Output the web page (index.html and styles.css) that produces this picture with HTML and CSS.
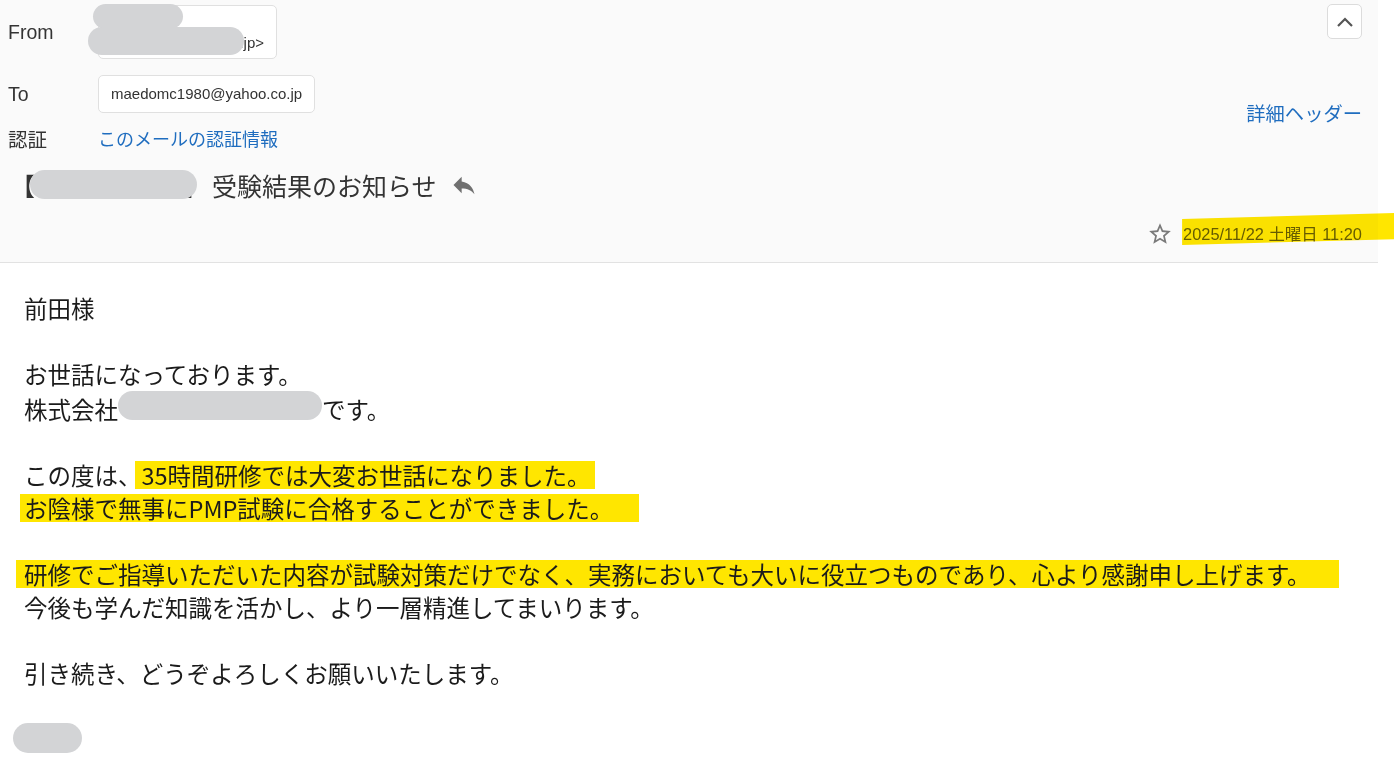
FILE: index.html
```html
<!DOCTYPE html>
<html lang="ja">
<head>
  <meta charset="UTF-8">
  <meta name="viewport" content="width=device-width, initial-scale=1.0">
  <title>受験結果のお知らせ</title>
  <link rel="stylesheet" href="styles.css">
</head>
<body>

  <header class="mail-head">
    <div class="head-top">
      <div class="meta">
        <div class="meta-row">
          <span class="label">From</span>
          <div class="addr addr-from">
            <span class="addr-line">&nbsp;</span>
            <span class="addr-line">.jp&gt;</span>
            <span class="blob blob-a"></span>
            <span class="blob blob-b"></span>
          </div>
        </div>
        <div class="meta-row to-row">
          <span class="label">To</span>
          <div class="addr">maedomc1980@yahoo.co.jp</div>
        </div>
        <div class="meta-row auth-row">
          <span class="label">認証</span>
          <a class="link" href="#">このメールの認証情報</a>
        </div>
      </div>

      <div class="head-side">
        <button class="collapse" aria-label="閉じる">
          <svg width="18" height="12" viewBox="0 0 18 12"><polyline points="2,10 9,3 16,10" fill="none" stroke="#555" stroke-width="2.2"/></svg>
        </button>
        <a class="link detail-link" href="#">詳細ヘッダー</a>
      </div>
    </div>

    <h1 class="subject">
      <span class="subject-tag">【<span class="tag-gap"></span>】<span class="blob blob-tag"></span></span>受験結果のお知らせ
      <svg class="reply" width="28" height="28" viewBox="0 0 24 24"><path d="M10 9V5l-7 7 7 7v-4.1c5 0 8.5 1.6 11 5.1-1-5-4-10-11-11z" fill="#707070"/></svg>
    </h1>

    <div class="date-row">
      <svg width="26" height="26" viewBox="0 0 24 24"><path d="M22 9.24l-7.19-.62L12 2 9.19 8.63 2 9.24l5.46 4.730L5.82 21 12 17.27 18.18 21l-1.63-7.03L22 9.24zM12 15.4l-3.76 2.27 1-4.28-3.32-2.88 4.38-.38L12 6.1l1.71 4.04 4.38.38-3.32 2.88 1 4.28L12 15.4z" fill="#7a7a7a"/></svg>
      <span class="date">2025/11/22 土曜日 11:20</span>
    </div>
  </header>

  <main class="mail-body">
    <p>前田様</p>
    <p>お世話になっております。<br>株式会社<span class="blob blob-company"></span>です。</p>
    <p>この度は、<mark class="hl hl-a">35時間研修では大変お世話になりました。</mark><br><mark class="hl hl-b">お陰様で無事にPMP試験に合格することができました。</mark></p>
    <p><mark class="hl hl-c">研修でご指導いただいた内容が試験対策だけでなく、実務においても大いに役立つものであり、心より感謝申し上げます。</mark><br>今後も学んだ知識を活かし、より一層精進してまいります。</p>
    <p>引き続き、どうぞよろしくお願いいたします。</p>
    <p class="sign"><span class="blob blob-sign"></span></p>
  </main>

</body>
</html>
```

FILE: styles.css
```css
body {
  margin: 0;
  font-family: "Liberation Sans", "Noto Sans CJK JP", sans-serif;
  color: #333;
  background: #fff;
}
.mail-head {
  box-sizing: border-box;
  width: 1378px;
  height: 263px;
  padding: 4px 16px 0 8px;
  background: #fafafa;
  border-bottom: 1px solid #e2e2e2;
}
.head-top {
  display: flex;
  justify-content: space-between;
}
.meta-row {
  display: flex;
  align-items: center;
}
.meta-row:first-child {
  margin-top: 1px;
}
.label {
  width: 90px;
  font-size: 19.5px;
  color: #333;
}
.addr {
  position: relative;
  padding: 0 12px;
  font-size: 15px;
  line-height: 36px;
  color: #333;
  background: #fff;
  border: 1px solid #e0e0e0;
  border-radius: 5px;
}
.addr-from {
  display: flex;
  flex-direction: column;
  align-items: flex-end;
  width: 153px;
  padding: 5px 12px;
  line-height: 21px;
}
.to-row {
  margin-top: 16px;
}
.auth-row {
  margin-top: 13px;
  line-height: 28px;
}
.link {
  color: #1f6dbf;
  text-decoration: none;
  font-size: 18px;
}
.blob {
  display: inline-block;
  background: #d3d4d6;
  border-radius: 15px;
}
.blob-a {
  position: absolute;
  left: -6px;
  top: -2px;
  width: 90px;
  height: 25px;
  border-radius: 13px;
}
.blob-b {
  position: absolute;
  left: -11px;
  top: 21px;
  width: 156px;
  height: 28px;
  border-radius: 14px;
}
.head-side {
  display: flex;
  flex-direction: column;
  align-items: flex-end;
}
.collapse {
  display: flex;
  align-items: center;
  justify-content: center;
  width: 35px;
  height: 35px;
  padding: 0;
  background: #fff;
  border: 1px solid #dcdcdc;
  border-radius: 5px;
}
.detail-link {
  margin-top: 63px;
  font-size: 19.3px;
  line-height: 26px;
}
.subject {
  display: flex;
  align-items: center;
  margin: 14px 0 0 2px;
  font-family: "Noto Sans CJK JP", sans-serif;
  font-size: 25px;
  font-weight: normal;
  line-height: 34px;
  color: #333;
}
.subject-tag {
  position: relative;
  margin-right: 4px;
}
.tag-gap {
  display: inline-block;
  width: 148px;
}
.blob-tag {
  position: absolute;
  left: 20px;
  top: 2px;
  width: 167px;
  height: 29px;
}
.reply {
  margin-left: 13px;
}
.date-row {
  display: flex;
  align-items: center;
  justify-content: flex-end;
  gap: 10px;
  margin-top: 19px;
  font-size: 16.4px;
  line-height: 22px;
  color: #666;
}
.date {
  position: relative;
}
.date::after {
  content: "";
  position: absolute;
  left: -1px;
  right: -32px;
  top: -10px;
  height: 32px;
  background: #ffe600;
  mix-blend-mode: multiply;
  clip-path: polygon(0 19%, 100% 0, 100% 82%, 0 100%);
}
.mail-body {
  padding: 29px 24px 0;
  font-family: "Noto Sans CJK JP", sans-serif;
  font-size: 23.5px;
  line-height: 33px;
  color: #1b1b1b;
}
.mail-body p {
  margin: 0 0 33px;
}
.mail-body .sign {
  margin: 0;
}
.hl {
  color: inherit;
  background: linear-gradient(transparent 3px, #ffe600 3px, #ffe600 31px, transparent 31px);
}
.hl-a {
  margin-left: -7px;
  padding: 0 4px 0 7px;
}
.hl-b {
  margin-left: -4px;
  padding: 0 26px 0 4px;
}
.hl-c {
  margin-left: -8px;
  padding: 0 28px 0 8px;
}
.blob-company {
  width: 204px;
  height: 29px;
  vertical-align: -1px;
}
.blob-sign {
  width: 69px;
  height: 30px;
  margin-left: -11px;
  vertical-align: -3px;
}
```
